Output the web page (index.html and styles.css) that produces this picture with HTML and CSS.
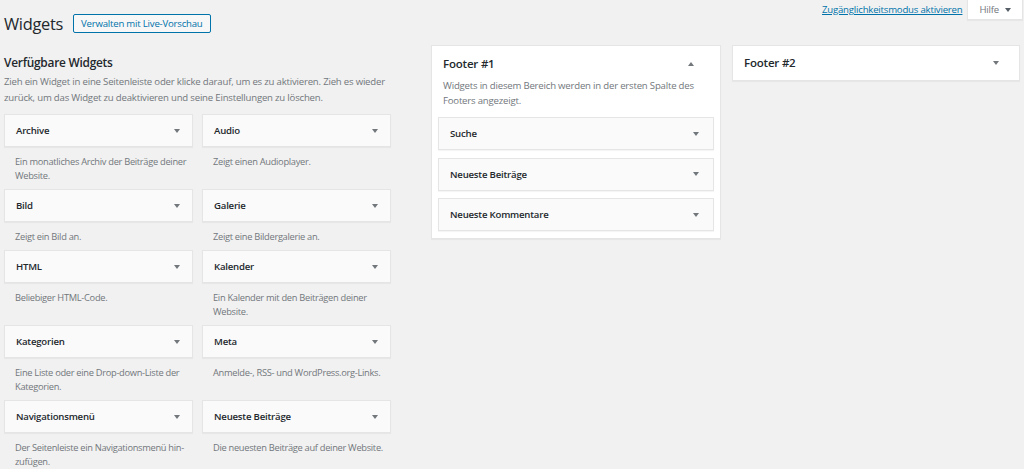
FILE: index.html
```html
<!DOCTYPE html>
<html lang="de">
<head>
<meta charset="utf-8">
<title>Widgets</title>
<link rel="stylesheet" href="styles.css">
</head>
<body>
<div class="wrap">
  <header class="top">
    <div class="title-row">
      <h1>Widgets</h1>
      <a class="btn" href="#">Verwalten mit Live-Vorschau</a>
    </div>
    <div class="meta">
      <a class="a11y" href="#">Zugänglichkeitsmodus aktivieren</a>
      <span class="help">Hilfe <span class="tri"></span></span>
    </div>
  </header>

  <div class="main">
    <section class="available">
      <h2>Verfügbare Widgets</h2>
      <p class="intro">Zieh ein Widget in eine Seitenleiste oder klicke darauf, um es zu aktivieren. Zieh es wieder zurück, um das Widget zu deaktivieren und seine Einstellungen zu löschen.</p>
      <div class="widget-grid">
        <div class="widget"><div class="widget-top"><span>Archive</span><span class="tri"></span></div><p class="wdesc">Ein monatliches Archiv der Beiträge deiner Website.</p></div>
        <div class="widget"><div class="widget-top"><span>Audio</span><span class="tri"></span></div><p class="wdesc">Zeigt einen Audioplayer.</p></div>
        <div class="widget"><div class="widget-top"><span>Bild</span><span class="tri"></span></div><p class="wdesc">Zeigt ein Bild an.</p></div>
        <div class="widget"><div class="widget-top"><span>Galerie</span><span class="tri"></span></div><p class="wdesc">Zeigt eine Bildergalerie an.</p></div>
        <div class="widget"><div class="widget-top"><span>HTML</span><span class="tri"></span></div><p class="wdesc">Beliebiger HTML-Code.</p></div>
        <div class="widget"><div class="widget-top"><span>Kalender</span><span class="tri"></span></div><p class="wdesc">Ein Kalender mit den Beiträgen deiner Website.</p></div>
        <div class="widget"><div class="widget-top"><span>Kategorien</span><span class="tri"></span></div><p class="wdesc">Eine Liste oder eine Drop-down-Liste der Kategorien.</p></div>
        <div class="widget"><div class="widget-top"><span>Meta</span><span class="tri"></span></div><p class="wdesc">Anmelde-, RSS- und WordPress.org-Links.</p></div>
        <div class="widget"><div class="widget-top"><span>Navigationsmenü</span><span class="tri"></span></div><p class="wdesc">Der Seitenleiste ein Navigationsmenü hin&shy;zufügen.</p></div>
        <div class="widget"><div class="widget-top"><span>Neueste Beiträge</span><span class="tri"></span></div><p class="wdesc">Die neuesten Beiträge auf deiner Website.</p></div>
      </div>
    </section>

    <section class="sidebar footer1">
      <div class="sidebar-head"><h3>Footer #1</h3><span class="tri up"></span></div>
      <p class="sdesc">Widgets in diesem Bereich werden in der ersten Spalte des Footers angezeigt.</p>
      <div class="sidebar-widgets">
        <div class="widget-top"><span>Suche</span><span class="tri"></span></div>
        <div class="widget-top"><span>Neueste Beiträge</span><span class="tri"></span></div>
        <div class="widget-top"><span>Neueste Kommentare</span><span class="tri"></span></div>
      </div>
    </section>

    <section class="sidebar footer2">
      <div class="sidebar-head"><h3>Footer #2</h3><span class="tri"></span></div>
    </section>
  </div>
</div>
</body>
</html>
```

FILE: styles.css
```css
* { box-sizing: border-box; }
html, body { margin: 0; padding: 0; }
body {
  background: #f1f1f1;
  font-family: "Open Sans", "Noto Sans", sans-serif;
  color: #23282d;
  font-size: 9.6px;
  letter-spacing: -0.2px;
  width: 1024px;
  height: 469px;
  overflow: hidden;
}
.wrap { padding: 0 4px 0 4px; }

.top {
  display: flex;
  justify-content: space-between;
  align-items: flex-start;
  height: 45px;
}
.title-row {
  display: flex;
  align-items: flex-start;
  padding-top: 14px;
  gap: 10px;
}
h1 {
  margin: 0;
  font-size: 16.4px;
  font-weight: 400;
  line-height: 19px;
  letter-spacing: -0.3px;
  color: #23282d;
}
.btn {
  display: inline-block;
  height: 19px;
  line-height: 17px;
  padding: 0 7px;
  border: 1px solid #0073aa;
  border-radius: 2px;
  background: #f7f7f7;
  color: #0073aa;
  text-decoration: none;
}
.meta {
  display: flex;
  align-items: flex-start;
  gap: 5px;
  margin-right: -3px;
}
.a11y {
  color: #0073aa;
  line-height: 20px;
  text-decoration: underline;
}
.help {
  display: flex;
  align-items: center;
  gap: 6px;
  height: 20px;
  padding: 0 11px 0 11px;
  background: #fff;
  border: 1px solid #e5e5e5;
  border-top: none;
  color: #72777c;
  box-shadow: 0 1px 1px rgba(0,0,0,.04);
}
.help .tri { border-top-color: #555d66; }

.tri {
  display: inline-block;
  flex: none;
  width: 0;
  height: 0;
  border-left: 3.5px solid transparent;
  border-right: 3.5px solid transparent;
  border-top: 4px solid #72777c;
}
.tri.up {
  border-top: none;
  border-bottom: 4px solid #72777c;
}

.main {
  display: flex;
  align-items: flex-start;
}
.available { width: 387px; flex: none; }
h2 {
  margin: 0;
  padding-top: 9px;
  font-size: 11.9px;
  font-weight: 600;
  line-height: 16px;
  letter-spacing: -0.25px;
  color: #23282d;
}
.intro {
  margin: 4px 0 9px;
  line-height: 15.5px;
  color: #72777c;
}
.widget-grid {
  display: grid;
  grid-template-columns: 189px 189px;
  column-gap: 9px;
}
.widget-top {
  display: flex;
  align-items: center;
  justify-content: space-between;
  height: 33px;
  padding: 0 12px 0 11px;
  background: #fafafa;
  border: 1px solid #e5e5e5;
  box-shadow: 0 1px 1px rgba(0,0,0,.04);
  font-weight: 600;
  color: #23282d;
}
.wdesc {
  margin: 0;
  padding: 8px 2px 6px 11px;
  font-size: 9.3px;
  letter-spacing: -0.3px;
  line-height: 14px;
  color: #72777c;
  hyphens: manual;
}

.sidebar {
  flex: none;
  background: #fff;
  border: 1px solid #e5e5e5;
  box-shadow: 0 1px 1px rgba(0,0,0,.04);
}
.footer1 { width: 290px; margin-left: 40px; padding: 0 6px 7px; }
.footer2 { width: 288px; margin-left: 11px; }
.sidebar-head {
  display: flex;
  align-items: center;
  justify-content: space-between;
  padding: 9px 20px 0 5px;
}
.footer2 .sidebar-head { padding: 8px 20px 8px 11px; }
h3 {
  margin: 0;
  font-size: 11.5px;
  font-weight: 600;
  line-height: 18px;
  color: #23282d;
}
.sdesc {
  margin: 5px 0 9px;
  padding: 0 5px;
  line-height: 15px;
  color: #72777c;
}
.sidebar-widgets {
  display: flex;
  flex-direction: column;
  gap: 7.5px;
}
.sidebar-widgets .widget-top { padding: 0 14px 0 11px; }
```
